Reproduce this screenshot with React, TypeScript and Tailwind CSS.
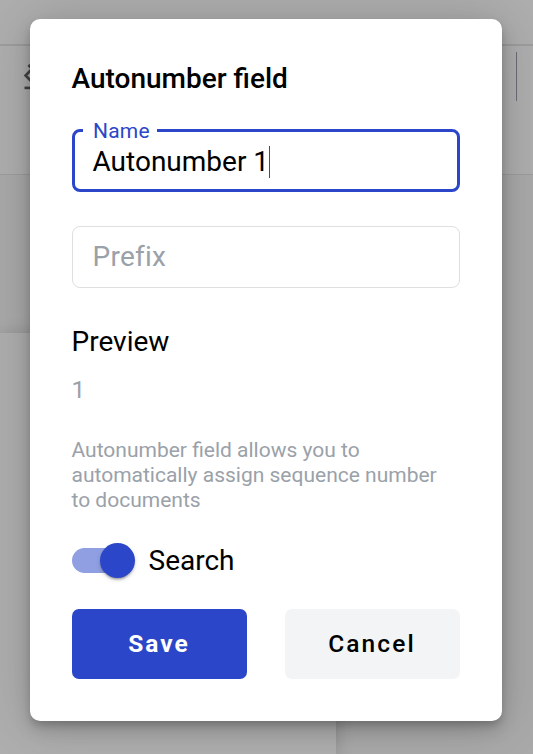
import React from "react";

function PageBackdrop() {
  return (
    <div className="flex h-full flex-col overflow-hidden bg-[#a8a9a8]">
      <div className="h-[46px] shrink-0 border-b-2 border-[#9d9d9d] bg-[#aeaeae]" />
      <div className="flex h-[129px] shrink-0 justify-between border-b border-[#9d9d9d] bg-[#aeaeae] pt-[6px] pr-[16px] pl-[24px]">
        <svg className="mt-[12px] h-[28px] w-[28px]" viewBox="0 0 28 28" fill="none" stroke="#414244" strokeWidth="2.6">
          <path d="M4.4 1L12 8.6M8 5L1.5 11.5L8 18" />
          <path d="M0.5 23.9h28" />
        </svg>
        <div className="h-[49px] w-px bg-[#6b6e76]" />
      </div>
      <div className="mt-[158px] w-[336px] flex-1 bg-[#aeaeae] shadow-[0_2px_16px_rgba(0,0,0,0.18)]" />
    </div>
  );
}

function Switch() {
  return (
    <div className="flex h-[35px] w-[63px] items-center">
      <div className="flex h-[25px] w-[60px] items-center justify-end rounded-full bg-[#8f9fe1]">
        <div className="-mr-[3px] h-[35px] w-[35px] shrink-0 rounded-full bg-[#2b46c8] shadow-[0_3px_2px_-2px_rgba(0,0,0,0.2),0_2px_2px_rgba(0,0,0,0.14),0_2px_5px_rgba(0,0,0,0.12)]" />
      </div>
    </div>
  );
}

export default function App() {
  return (
    <div className="relative h-[754px] w-[533px] overflow-hidden font-['Roboto',sans-serif]">
      <PageBackdrop />
      <div className="absolute inset-0 flex items-start pt-[19px] pl-[30px]">
        <div
          role="dialog"
          className="flex h-[702px] w-[472px] flex-col rounded-[10px] bg-white px-[42px] pt-[44px] text-black shadow-[0_5px_9px_-2px_rgba(0,0,0,0.2),0_9px_17px_rgba(0,0,0,0.14),0_2px_50px_rgba(0,0,0,0.18)]"
        >
          <h2 className="-ml-[0.5px] h-[32px] text-[28px] leading-[32px] font-medium whitespace-nowrap">
            Autonumber field
          </h2>

          <div className="relative mt-[34px] flex h-[63px] shrink-0 items-center rounded-[8px] border-[3px] border-[#2b46c8] pt-[2px] pl-[17.5px]">
            <label className="absolute -top-[13px] left-[8px] h-[24px] bg-white pr-[7px] pl-[10px] text-[21px] leading-[24px] tracking-[0.2px] text-[#2b46c8]">
              Name
            </label>
            <span className="text-[28px] leading-[32px] whitespace-nowrap">Autonumber 1</span>
            <span className="h-[32px] w-px bg-[#2b46c8]" />
          </div>

          <div className="mt-[34px] flex h-[62px] shrink-0 items-center rounded-[8px] border border-[#dfdfe0] pl-[19.5px] text-[28px] leading-[32px] tracking-[0.26px] text-[#9aa1a9]">
            Prefix
          </div>

          <div className="mt-[38px] -ml-[0.5px] text-[28px] leading-[32px]">Preview</div>
          <div className="mt-[17px] -ml-[0.5px] text-[24.5px] leading-[29px] text-[#9aa1a9]">1</div>

          <p className="mt-[34px] -ml-[0.5px] text-[21px] leading-[25px] text-[#9aa1a9]">
            Autonumber field allows you to
            <br />
            automatically assign sequence number
            <br />
            to documents
          </p>

          <div className="mt-[30px] flex items-center gap-[13.5px]">
            <Switch />
            <span className="text-[28px] leading-[35px]">Search</span>
          </div>

          <div className="mt-[31px] flex justify-between">
            <button className="h-[70px] w-[175px] rounded-[7px] bg-[#2b46c8] pr-[1px] text-[24.5px] font-bold tracking-[2px] text-white">
              Save
            </button>
            <button className="h-[70px] w-[175px] rounded-[7px] bg-[#f3f4f6] pr-[1px] text-[24.5px] font-medium tracking-[2.1px] text-black">
              Cancel
            </button>
          </div>
        </div>
      </div>
    </div>
  );
}
